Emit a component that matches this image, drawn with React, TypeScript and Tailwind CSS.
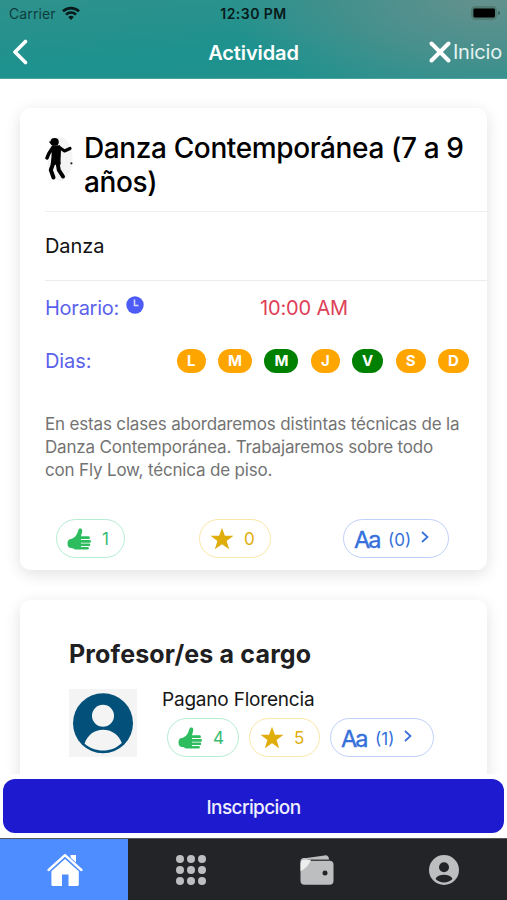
import type { ReactNode } from 'react';

const DAYS = [
  { label: 'L', active: false, width: 'w-[29px]' },
  { label: 'M', active: false, width: 'w-[34px]' },
  { label: 'M', active: true, width: 'w-[34px]' },
  { label: 'J', active: false, width: 'w-[29px]' },
  { label: 'V', active: true, width: 'w-[31px]' },
  { label: 'S', active: false, width: 'w-[30px]' },
  { label: 'D', active: false, width: 'w-[31px]' },
];

function WifiIcon() {
  return (
    <svg viewBox="0 0 18 14" className="w-[18px] h-[14px] mb-[2px]" fill="none" stroke="#071a1a">
      <path d="M1 5.3a11.5 11.5 0 0 1 16 0" strokeWidth="2.7" />
      <path d="M4 8.600a7.200 7.200 0 0 1 10 0" strokeWidth="2.500" />
      <path d="M9 14 6.200 11a4.200 4.200 0 0 1 5.600 0z" fill="#071a1a" stroke="none" />
    </svg>
  );
}

function BatteryIcon() {
  return (
    <svg viewBox="0 0 30 14" className="w-[30px] h-[14px] mb-px">
      <rect x="0.6" y="0.6" width="25" height="12.8" rx="3.6" fill="#4d7d75" stroke="#54796f" />
      <rect x="2.4" y="2.6" width="21.6" height="8.8" rx="1.4" fill="#000" />
      <path d="M27 4.8c1.6.5 2 1.2 2 2.2s-.4 1.7-2 2.2z" fill="#3b625b" />
    </svg>
  );
}

function DancerIcon() {
  return (
    <svg viewBox="0 0 28 46" className="w-7 h-[46px]">
      <ellipse cx="15" cy="23" rx="12.5" ry="22" fill="#f4f4f4" />
      <ellipse cx="9.600" cy="5.900" rx="4.200" ry="3.900" fill="#000" />
      <path d="M4.500 5.500 7 8.200" stroke="#000" strokeWidth="1.500" />
      <path d="M7.500 10.500 14.500 10 15.200 14.500 14.800 24.500 15 28H6.500L7.300 20z" fill="#000" stroke="#000" strokeWidth="1.500" strokeLinejoin="round" />
      <g fill="none" stroke="#000" strokeLinecap="round" strokeLinejoin="round">
        <path d="M8 11.200 4 17.200 2 22" strokeWidth="3.400" />
        <path d="M14.500 11.500 19.500 15 25 12.500" strokeWidth="3.200" />
        <path d="M8.500 26.500 5.800 34 8.500 41.500" strokeWidth="4" />
        <path d="M12.500 26.500 13.800 34 18 40.500" strokeWidth="4" />
      </g>
      <circle cx="26.400" cy="27.300" r="1.100" fill="#222" />
    </svg>
  );
}

function ClockIcon() {
  return (
    <svg viewBox="0 0 18 18" className="w-[18px] h-[18px]">
      <circle cx="9" cy="9" r="8.7" fill="#4d5cf7" />
      <path d="M8.500 3.500V9.500h4" fill="none" stroke="#dadcfe" strokeWidth="1.500" />
    </svg>
  );
}

function ThumbIcon() {
  return (
    <svg viewBox="0 0 24 22" className="w-6 h-[22px]" fill="#2dbd5f">
      <path d="M14 21.500H8.500C7 21.500 6.200 20 4.500 20 2 20 .5 18.500.5 15.500S1.800 11 4 11C8 10 10 6.500 11.200 2.500 11.700.4 13 .2 14 .6c1.300.6 1.400 2 1.100 3.500L14 8.300z" />
      <rect x="13.500" y="8.200" width="9.300" height="2.900" rx="1.200" />
      <rect x="13.500" y="12" width="10.400" height="2.700" rx="1.200" />
      <rect x="13.500" y="15.600" width="9.700" height="2.500" rx="1.200" />
      <rect x="13.500" y="19" width="8.300" height="2.500" rx="1.200" />
    </svg>
  );
}

function StarIcon() {
  return (
    <svg viewBox="0 0 24 24" className="w-6 h-6" fill="currentColor">
      <path d="M12 .8l2.900 8h8.600l-6.900 5.100 2.600 8.300L12 17.200l-7.200 5 2.600-8.300L.5 8.800h8.600z" />
    </svg>
  );
}

function AvatarIcon() {
  return (
    <svg viewBox="0 0 68 68" className="w-[68px] h-[68px] shrink-0">
      <rect width="68" height="68" fill="#f4f4f4" />
      <circle cx="34" cy="34.300" r="30" fill="#03507a" />
      <circle cx="34" cy="26.700" r="11" fill="#f4f4f4" />
      <path d="M15.500 54.500C19 45.500 25.500 40.800 34 40.800s15.500 4.700 18.800 13.200C47.500 59.200 41 61.500 34 61.500s-13.500-2.300-18.500-7z" fill="#f4f4f4" />
    </svg>
  );
}

function HomeIcon() {
  return (
    <svg viewBox="0 0 36 34" className="w-9 h-[34px] ml-px" fill="#fff">
      <path d="M23.500 2h5.500v11l-5.500-5z" />
      <path d="M1.600 17.300 18 2.500l16.400 14.800" fill="none" stroke="#4d8dff" strokeWidth="4.500" />
      <path d="M1.600 17 18 2.200 34.400 17" fill="none" stroke="#fff" strokeWidth="2.400" strokeLinecap="round" strokeLinejoin="round" />
      <path d="M18 5.900 31.800 18.300V31.500a1.500 1.500 0 0 1-1.500 1.500H21.500V21.500h-6.500V33H5.900a1.500 1.500 0 0 1-1.500-1.500V18.300z" />
    </svg>
  );
}

function GridIcon() {
  return (
    <svg viewBox="0 0 30 30" className="w-[30px] h-[30px]" fill="#bdbec0">
      {[4, 15, 26].map((cy) => [4, 15, 26].map((cx) => <circle key={`${cx}-${cy}`} cx={cx} cy={cy} r="4" />))}
    </svg>
  );
}

function WalletIcon() {
  return (
    <svg viewBox="0 0 34 30" className="w-[34px] h-[30px]">
      <path d="M3 3.500 24.500.4C27.500 0 29 1.700 29 4.500H2z" fill="#bdbec0" />
      <rect x=".5" y="3" width="29" height="8" rx="3.500" fill="#bdbec0" />
      <rect x=".5" y="5.700" width="33" height="24" rx="4" fill="#bdbec0" />
      <path d="M8 5.200h21.500" stroke="#232427" strokeWidth="1.200" />
      <path d="M.5 9C.5 6 2 4.700 4.500 4.700H11C9 9.500 5.500 14 .5 16z" fill="#ededee" />
      <circle cx="25" cy="18" r="2.500" fill="#232427" />
    </svg>
  );
}

function ProfileIcon() {
  return (
    <svg viewBox="0 0 30 30" className="w-[30px] h-[30px]">
      <circle cx="15" cy="15" r="15" fill="#bdbec0" />
      <circle cx="15" cy="12.200" r="5" fill="#232427" />
      <path d="M6.500 24c1.200-2.800 4.500-4.200 8.500-4.200s7.300 1.400 8.500 4.200c-2.300 2.300-5.300 3.500-8.500 3.500S8.800 26.300 6.500 24z" fill="#232427" />
    </svg>
  );
}

function Pill({ className, children }: { className: string; children: ReactNode }) {
  return <div className={`h-[39px] rounded-full border flex items-center shrink-0 ${className}`}>{children}</div>;
}

function LikePill({ count, className }: { count: number; className: string }) {
  return (
    <Pill className={`border-[#b5edd2] text-[#35ba72] pl-[10px] ${className}`}>
      <ThumbIcon />
      <span className="ml-[11px] pt-[3px] text-[17px]">{count}</span>
    </Pill>
  );
}

function StarPill({ count, className }: { count: number; className: string }) {
  return (
    <Pill className={`border-[#fbe7a9] text-[#dfad0c] pl-[10px] ${className}`}>
      <StarIcon />
      <span className="ml-[10px] pt-[3px] text-[17px]">{count}</span>
    </Pill>
  );
}

function CommentsPill({ count, className }: { count: number; className: string }) {
  return (
    <Pill className={`border-[#bfd0fa] text-[#346fdb] pl-[10px] ${className}`}>
      <span className="w-[25px] pt-[2px] text-[23.5px] tracking-[-1.9px] [-webkit-text-stroke:0.4px_currentColor]">Aa</span>
      <span className="ml-[9px] pt-[4px] text-[17px]">({count})</span>
      <svg viewBox="0 0 8 12" className="w-2 h-3 ml-[10px] mb-[3px]" fill="none" stroke="currentColor" strokeWidth="1.700">
        <path d="m1 1 5.500 5L1 11" />
      </svg>
    </Pill>
  );
}

function Header() {
  return (
    <header className="h-[79px] shrink-0 border-b border-[#4ba39f] bg-[radial-gradient(ellipse_260px_110px_at_96%_0%,#64918d_0%,#47908d_50%,transparent_100%),linear-gradient(175deg,#2f918c_0%,#1d928e_60%,#25918d_100%)]">
      <div className="h-[27px] grid grid-cols-[1fr_auto_1fr] items-center pl-[9px] pr-[6px] text-[14px] text-[#071a1a]">
        <div className="flex items-center gap-[6px]">
          <span className="text-[#0c3d3c] tracking-[0.1px]">Carrier</span>
          <WifiIcon />
        </div>
        <span className="mr-[3px] font-semibold tracking-[0.45px]">12:30 PM</span>
        <div className="flex justify-end">
          <BatteryIcon />
        </div>
      </div>
      <div className="h-[50px] grid grid-cols-[1fr_auto_1fr] items-center pl-3 pr-[5px] text-white">
        <svg viewBox="0 0 16 26" className="w-4 h-[26px]" fill="none" stroke="#fff" strokeWidth="3.600" strokeLinecap="round" strokeLinejoin="round">
          <path d="M13.500 2.500 3 13l10.500 10.500" />
        </svg>
        <h1 className="mr-[7px] pt-px text-[20px] font-semibold tracking-[-0.1px]">Actividad</h1>
        <div className="flex items-center justify-end gap-[2px]">
          <svg viewBox="0 0 22 22" className="w-[22px] h-[22px]" stroke="#fff" strokeWidth="3.900" strokeLinecap="round">
            <path d="m2.500 2.500 17 17M19.500 2.500l-17 17" />
          </svg>
          <span className="text-[20px] tracking-[-0.2px] text-[#e4f3f2]">Inicio</span>
        </div>
      </div>
    </header>
  );
}

function ActivityCard() {
  return (
    <section className="h-[462px] shrink-0 rounded-[10px] bg-white pl-[25px] shadow-[0_4px_16px_rgba(0,0,0,0.12)]">
      <div className="h-[104px] flex border-b border-[#efefef]">
        <div className="pt-[28px]">
          <DancerIcon />
        </div>
        <h2 className="ml-[11px] pt-[23px] text-[28px] leading-[34px] font-medium tracking-[-0.38px] text-black whitespace-nowrap">
          Danza Contemporánea (7 a 9
          <br />
          años)
        </h2>
      </div>
      <div className="h-[69px] flex items-center border-b border-[#ececec] text-[20px] tracking-[-0.1px] text-[#111]">Danza</div>
      <div className="h-[54px] flex items-center text-[20px]">
        <span className="w-[81px] shrink-0 tracking-[-0.25px] text-[#5a62ec]">Horario:</span>
        <span className="mb-[6px]">
          <ClockIcon />
        </span>
        <span className="ml-[116px] tracking-[-0.15px] text-[#de4057] whitespace-nowrap">10:00 AM</span>
      </div>
      <div className="h-[52px] flex items-center pr-[18px] text-[20px]">
        <span className="flex-1 tracking-[-0.1px] text-[#5a62ec]">Dias:</span>
        <div className="flex gap-[12.4px]">
          {DAYS.map((day, i) => (
            <span
              key={i}
              className={`${day.width} h-6 pt-px rounded-full flex items-center justify-center text-[15px] font-bold text-white ${day.active ? 'bg-[#008000]' : 'bg-[#ffa500]'}`}
            >
              {day.label}
            </span>
          ))}
        </div>
      </div>
      <p className="pt-[26px] text-[17px] leading-[23px] tracking-[-0.17px] text-[#737373] whitespace-nowrap">
        En estas clases abordaremos distintas técnicas de la
        <br />
        Danza Contemporánea. Trabajaremos sobre todo
        <br />
        con Fly Low, técnica de piso.
      </p>
      <div className="flex mt-[37px] pl-[11px]">
        <LikePill count={1} className="w-[69px]" />
        <StarPill count={0} className="w-[72px] ml-[74px]" />
        <CommentsPill count={0} className="w-[106px] ml-[72px]" />
      </div>
    </section>
  );
}

function TeacherCard() {
  return (
    <section className="h-[240px] shrink-0 mt-[30px] rounded-[10px] bg-white pl-[49px] pt-[36px] shadow-[0_4px_16px_rgba(0,0,0,0.12)]">
      <h2 className="text-[25px] leading-9 font-bold tracking-[0.16px] text-[#202022]">Profesor/es a cargo</h2>
      <div className="flex mt-[17px]">
        <AvatarIcon />
        <div className="ml-[25px]">
          <div className="h-[22px] text-[19px] leading-[22px] tracking-[-0.2px] text-[#161616]">Pagano Florencia</div>
          <div className="flex mt-[7px] ml-[5px]">
            <LikePill count={4} className="w-[72px]" />
            <StarPill count={5} className="w-[71px] ml-[10px]" />
            <CommentsPill count={1} className="w-[104px] ml-[10px]" />
          </div>
        </div>
      </div>
    </section>
  );
}

function TabBar() {
  return (
    <nav className="h-[62px] shrink-0 grid grid-cols-[128px_125px_128px_126px] border-t border-[#54585d] bg-[#232427]">
      <div className="bg-[#4d8dff] flex items-center justify-center">
        <HomeIcon />
      </div>
      <div className="flex items-center justify-center">
        <GridIcon />
      </div>
      <div className="flex items-center justify-center">
        <WalletIcon />
      </div>
      <div className="flex items-center justify-center pr-px">
        <ProfileIcon />
      </div>
    </nav>
  );
}

export default function App() {
  return (
    <div className="w-[507px] h-[900px] flex flex-col overflow-hidden bg-white font-['Inter','Liberation_Sans',sans-serif]">
      <Header />
      <main className="h-[695px] shrink-0 flex flex-col overflow-hidden px-5 pt-[29px]">
        <ActivityCard />
        <TeacherCard />
      </main>
      <div className="h-[64px] shrink-0 px-[3px] pt-[5px]">
        <button className="w-full h-[54px] pt-[4px] rounded-[12px] bg-[#1e1ad0] text-[19px] font-medium tracking-[-0.6px] text-[#eeeefc]">Inscripcion</button>
      </div>
      <TabBar />
    </div>
  );
}
